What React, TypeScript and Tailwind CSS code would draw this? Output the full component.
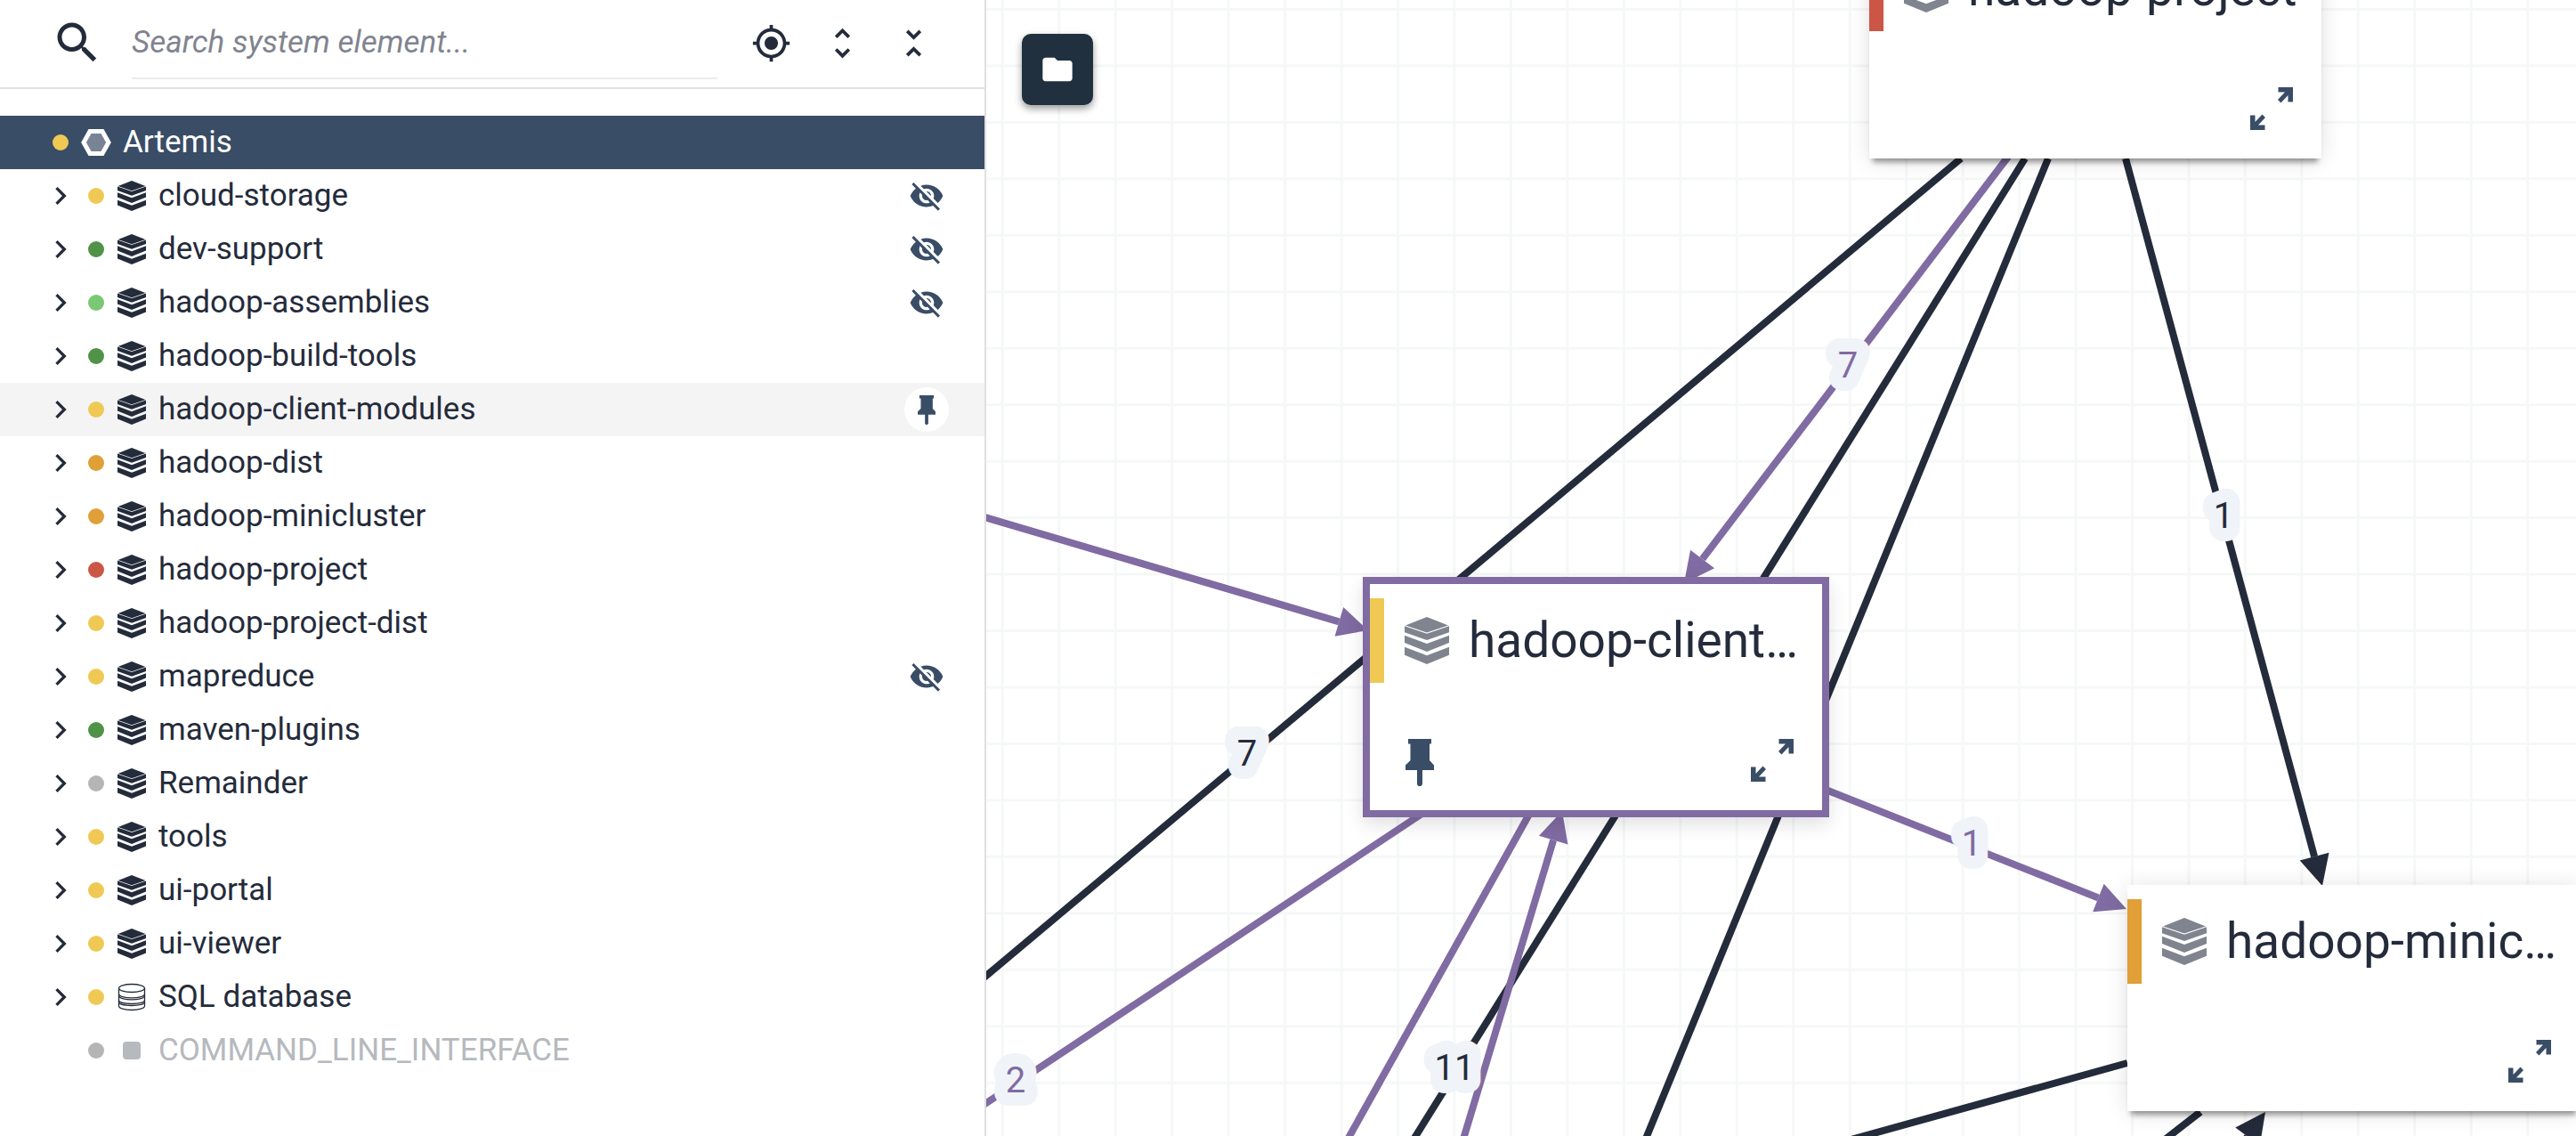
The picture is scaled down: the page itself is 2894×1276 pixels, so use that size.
import React from "react";

type Tone = "yellow" | "green" | "lime" | "orange" | "red" | "gray";

const dotTone: Record<Tone, string> = {
  yellow: "bg-[#efc954]",
  green: "bg-[#509348]",
  lime: "bg-[#7ac774]",
  orange: "bg-[#e09f37]",
  red: "bg-[#cb5646]",
  gray: "bg-[#b5b5b5]",
};

type Item = {
  name: string;
  tone: Tone;
  icon?: "stack" | "database" | "square";
  action?: "hidden" | "pinned";
};

const items: Item[] = [
  { name: "cloud-storage", tone: "yellow", action: "hidden" },
  { name: "dev-support", tone: "green", action: "hidden" },
  { name: "hadoop-assemblies", tone: "lime", action: "hidden" },
  { name: "hadoop-build-tools", tone: "green" },
  { name: "hadoop-client-modules", tone: "yellow", action: "pinned" },
  { name: "hadoop-dist", tone: "orange" },
  { name: "hadoop-minicluster", tone: "orange" },
  { name: "hadoop-project", tone: "red" },
  { name: "hadoop-project-dist", tone: "yellow" },
  { name: "mapreduce", tone: "yellow", action: "hidden" },
  { name: "maven-plugins", tone: "green" },
  { name: "Remainder", tone: "gray" },
  { name: "tools", tone: "yellow" },
  { name: "ui-portal", tone: "yellow" },
  { name: "ui-viewer", tone: "yellow" },
  { name: "SQL database", tone: "yellow", icon: "database" },
  { name: "COMMAND_LINE_INTERFACE", tone: "gray", icon: "square" },
];

function MaterialIcon({ d, className }: { d: string; className: string }) {
  return (
    <svg viewBox="0 0 24 24" className={className} fill="currentColor" aria-hidden="true">
      <path d={d} />
    </svg>
  );
}

const paths = {
  search:
    "M15.5 14h-.79l-.28-.27C15.41 12.59 16 11.11 16 9.5 16 5.91 13.09 3 9.5 3S3 5.91 3 9.5 5.91 16 9.5 16c1.61 0 3.09-.59 4.23-1.57l.27.28v.79l5 4.99L20.49 19l-4.99-5zm-6 0C7.01 14 5 11.99 5 9.5S7.01 5 9.5 5 14 7.01 14 9.5 11.99 14 9.5 14z",
  locate:
    "M12 8c-2.21 0-4 1.79-4 4s1.79 4 4 4 4-1.79 4-4-1.79-4-4-4zm8.94 3c-.46-4.17-3.77-7.48-7.94-7.94V1h-2v2.06C6.83 3.52 3.52 6.83 3.06 11H1v2h2.06c.46 4.17 3.77 7.48 7.94 7.94V23h2v-2.06c4.17-.46 7.48-3.77 7.94-7.94H23v-2h-2.06zM12 19c-3.87 0-7-3.13-7-7s3.13-7 7-7 7 3.13 7 7-3.13 7-7 7z",
  unfoldMore:
    "M12 5.83L15.17 9l1.41-1.41L12 3 7.41 7.59 8.83 9 12 5.83zm0 12.34L8.83 15l-1.41 1.41L12 21l4.59-4.59L15.17 15 12 18.17z",
  unfoldLess:
    "M7.41 18.59L8.83 20 12 16.83 15.17 20l1.41-1.41L12 14l-4.59 4.59zm9.18-13.18L15.17 4 12 7.17 8.83 4 7.41 5.41 12 10l4.59-4.59z",
  chevron: "M10 6L8.59 7.41 13.17 12l-4.58 4.59L10 18l6-6z",
  hidden:
    "M12 7c2.76 0 5 2.24 5 5 0 .65-.13 1.26-.36 1.83l2.92 2.92c1.51-1.26 2.7-2.89 3.43-4.75-1.73-4.39-6-7.5-11-7.5-1.4 0-2.74.25-3.98.7l2.16 2.16C10.74 7.13 11.35 7 12 7zM2 4.27l2.28 2.28.46.46C3.08 8.3 1.78 10.02 1 12c1.73 4.39 6 7.5 11 7.5 1.55 0 3.03-.3 4.38-.84l.42.42L19.73 22 21 20.73 3.27 3 2 4.27zM7.53 9.8l1.55 1.55c-.05.21-.08.43-.08.65 0 1.66 1.34 3 3 3 .22 0 .44-.03.65-.08l1.55 1.55c-.67.33-1.41.53-2.2.53-2.76 0-5-2.24-5-5 0-.79.2-1.53.53-2.2zm4.31-.78l3.15 3.15.02-.16c0-1.66-1.34-3-3-3l-.17.01z",
  folder: "M10 4H4c-1.1 0-1.99.9-1.99 2L2 18c0 1.1.9 2 2 2h16c1.1 0 2-.9 2-2V8c0-1.1-.9-2-2-2h-8l-2-2z",
};

function StackIcon({ className }: { className: string }) {
  return (
    <svg viewBox="0 0 50 53" className={className} fill="currentColor" aria-hidden="true">
      <path d="M25 0L49 9.400L25 17.600L1 9.400Z" />
      <path d="M0 10.200L25 18.800L50 10.200V17.300L25 26L0 17.300Z" />
      <path d="M0 20.800L25 30L50 20.800V29L25 39L0 29Z" />
      <path d="M0 33.800L25 43.300L50 33.800V42.800L25 53L0 42.800Z" />
    </svg>
  );
}

function PinIcon({ className }: { className: string }) {
  return (
    <svg viewBox="0 0 32 53" className={className} fill="currentColor" aria-hidden="true">
      <path d="M3 0H29V5.500H27V24L32 29.500V35H19V51L17.500 53H14.500L13 51V35H0V29.500L5.500 24V5.500H3Z" />
    </svg>
  );
}

function ExpandIcon({ className }: { className: string }) {
  return (
    <svg viewBox="0 0 48 48" className={className} fill="currentColor" aria-hidden="true">
      <path d="M31.500 0H48V16.500H42.500V9L34.500 17.500L31 14L39 5.500H31.500Z" />
      <path d="M16.500 48H0V31.500H5.500V39L13.500 30.500L17 34L9 42.500H16.500Z" />
    </svg>
  );
}

function DatabaseIcon({ className }: { className: string }) {
  return (
    <svg viewBox="0 0 32 32" className={className} fill="none" stroke="currentColor" strokeWidth="1.300" aria-hidden="true">
      <ellipse cx="16" cy="6" rx="14.500" ry="4.500" />
      <path d="M1.500 6V26C1.500 28.500 8 30.500 16 30.500S30.500 28.500 30.500 26V6" />
      <path d="M1.500 12.500C1.500 15 8 16.800 16 16.800S30.500 15 30.500 12.500" />
      <path d="M1.500 14.500C1.500 17 8 18.800 16 18.800S30.500 17 30.500 14.500" />
      <path d="M1.500 19.500C1.500 22 8 23.500 16 23.500S30.500 22 30.500 19.500" />
      <path d="M1.500 21.500C1.500 24 8 25.500 16 25.500S30.500 24 30.500 21.500" />
    </svg>
  );
}

function TreeRow({ item }: { item: Item }) {
  const external = item.icon === "square";
  const rowTone = item.action === "pinned" ? "bg-[#f4f4f4]" : "";
  return (
    <li className={`flex h-[60px] items-center pr-10 pl-12 ${rowTone}`}>
      {external ? (
        <span className="size-10" />
      ) : (
        <button type="button" aria-label={`Expand ${item.name}`} className="size-10">
          <MaterialIcon d={paths.chevron} className="size-10" />
        </button>
      )}
      <span className={`ml-[11px] size-[18px] shrink-0 rounded-full ${dotTone[item.tone]}`} />
      <span className="ml-[14px] flex w-[34px] justify-center">
        {item.icon === "database" ? (
          <DatabaseIcon className="size-8" />
        ) : external ? (
          <span className="size-5 rounded-sm bg-[#b6b9be]" />
        ) : (
          <StackIcon className="h-[34px] w-8" />
        )}
      </span>
      <span className={`ml-[13px] flex-1 truncate ${external ? "text-[#b6b9be]" : ""}`}>{item.name}</span>
      {item.action === "hidden" && (
        <button type="button" aria-label={`Show ${item.name}`} className="flex size-[50px] items-center justify-center text-[#3a4d66]">
          <MaterialIcon d={paths.hidden} className="size-10" />
        </button>
      )}
      {item.action === "pinned" && (
        <button
          type="button"
          aria-label={`Unpin ${item.name}`}
          className="flex size-[50px] items-center justify-center rounded-full bg-white text-[#3a4d66]"
        >
          <PinIcon className="h-[33px] w-5" />
        </button>
      )}
    </li>
  );
}

function Sidebar() {
  return (
    <aside className="flex w-[1108px] shrink-0 flex-col border-r-2 border-[#e0e0e0] bg-white">
      <div className="flex h-[100px] items-start border-b-2 border-[#e0e0e0] pr-10 pl-[57px]">
        <label htmlFor="search" aria-label="Search" className="mt-[18px]">
          <MaterialIcon d={paths.search} className="size-[60px]" />
        </label>
        <input
          id="search"
          type="text"
          placeholder="Search system element..."
          className="mr-5 ml-[31px] h-[89px] min-w-0 flex-1 border-b-2 border-[#ebebeb] pt-2 placeholder:text-[#80848f] placeholder:italic focus:outline-none"
        />
        <div className="flex h-24 items-center">
          <button type="button" aria-label="Locate selection" className="flex w-20 justify-center">
            <MaterialIcon d={paths.locate} className="size-[45px]" />
          </button>
          <button type="button" aria-label="Expand all" className="flex w-20 justify-center">
            <MaterialIcon d={paths.unfoldMore} className="size-[45px]" />
          </button>
          <button type="button" aria-label="Collapse all" className="flex w-20 justify-center">
            <MaterialIcon d={paths.unfoldLess} className="size-[45px]" />
          </button>
        </div>
      </div>
      <nav aria-label="System elements" className="pt-[30px]">
        <div className="flex h-[60px] items-center bg-[#3a4d66] pl-12 text-white">
          <span className="ml-[11px] size-[18px] rounded-full bg-[#efc954]" />
          <svg viewBox="0 0 34 30" className="ml-[14px] h-[30px] w-[34px]" aria-hidden="true">
            <path d="M10 2.500H24L31 15L24 27.500H10L3 15Z" fill="#788495" stroke="#ffffff" strokeWidth="5" />
          </svg>
          <span className="ml-[13px]">Artemis</span>
        </div>
        <ul>
          {items.map((item) => (
            <TreeRow key={item.name} item={item} />
          ))}
        </ul>
      </nav>
    </aside>
  );
}

type Edge = { from: [number, number]; to: [number, number]; selected?: boolean; arrow?: boolean };

const edges: Edge[] = [
  { from: [1095, 178], to: [-12, 1106] },
  { from: [1167, 178], to: [470, 1296] },
  { from: [1193, 178], to: [734, 1296] },
  { from: [1280, 178], to: [1501, 995], arrow: true },
  { from: [1282, 1194], to: [950, 1286] },
  { from: [1364, 1249], to: [1310, 1291] },
  { from: [1403, 1296], to: [1437, 1249], arrow: true },
  { from: [1148, 176], to: [784, 655], selected: true, arrow: true },
  { from: [-12, 578], to: [429, 708], selected: true, arrow: true },
  { from: [494, 911], to: [-12, 1247], selected: true },
  { from: [612, 911], to: [397, 1296], selected: true },
  { from: [531, 1296], to: [647, 911], selected: true, arrow: true },
  { from: [938, 885], to: [1281, 1021], selected: true, arrow: true },
];

const labels = [
  { text: "7", x: 293, y: 860 },
  { text: "11", x: 526, y: 1213 },
  { text: "1", x: 1390, y: 593 },
  { text: "7", x: 968, y: 424, selected: true },
  { text: "2", x: 33, y: 1227, selected: true },
  { text: "1", x: 1107, y: 961, selected: true },
];

function EdgeLine({ edge }: { edge: Edge }) {
  const [x1, y1] = edge.from;
  const [x2, y2] = edge.to;
  const length = Math.hypot(x2 - x1, y2 - y1);
  const ux = (x2 - x1) / length;
  const uy = (y2 - y1) / length;
  const head = edge.arrow ? 34 : 0;
  const bx = x2 - ux * head;
  const by = y2 - uy * head;
  const color = edge.selected ? "#806ba2" : "#242b3b";
  return (
    <g>
      <line x1={x1} y1={y1} x2={bx} y2={by} stroke={color} strokeWidth={8} />
      {edge.arrow && (
        <polygon points={`${x2},${y2} ${bx - uy * 17},${by + ux * 17} ${bx + uy * 17},${by - ux * 17}`} fill={color} />
      )}
    </g>
  );
}

function Edges() {
  return (
    <svg className="absolute inset-0 size-full" aria-hidden="true">
      <defs>
        <pattern id="grid" x="16.800" y="9" width="63.460" height="63.460" patternUnits="userSpaceOnUse">
          <path d="M0 1.500H63.460M1.500 0V63.460" stroke="#f6f8f8" strokeWidth="3" />
        </pattern>
      </defs>
      <rect width="100%" height="100%" fill="url(#grid)" />
      {edges.map((edge, i) => (
        <EdgeLine key={i} edge={edge} />
      ))}
      {labels.map((label) => (
        <text
          key={`${label.text}-${label.x}`}
          x={label.x}
          y={label.y}
          textAnchor="middle"
          fill={label.selected ? "#806ba2" : "#242b3b"}
          stroke="#f0f3f8"
          strokeWidth={30}
          strokeLinejoin="round"
          paintOrder="stroke"
          className="text-[40px]"
        >
          {label.text}
        </text>
      ))}
    </svg>
  );
}

type NodeProps = { name: string; tone: Tone; place: string; pinned?: boolean };

function NodeCard({ name, tone, place, pinned }: NodeProps) {
  const frame = pinned
    ? "outline-8 outline-[#806ba2] shadow-[0_8px_20px_8px_rgba(0,0,0,0.12)]"
    : "shadow-[0_8px_6px_-4px_rgba(0,0,0,0.4),0_2px_24px_rgba(0,0,0,0.12)]";
  return (
    <article className={`absolute flex h-[254px] w-[508px] flex-col justify-between bg-white ${place} ${frame}`}>
      <header className="mt-4 flex h-[95px] items-center">
        <span className={`h-full w-4 shrink-0 ${dotTone[tone]}`} />
        <StackIcon className="ml-[23px] h-[53px] w-[50px] shrink-0 text-[#80848f]" />
        <h2 className="mr-5 ml-[22px] flex-1 truncate text-[55px]">{name}</h2>
      </header>
      <footer className="flex h-20 items-start justify-between pr-8 pl-10 text-[#3a4d66]">
        {pinned ? (
          <button type="button" aria-label={`Unpin ${name}`}>
            <PinIcon className="h-[53px] w-8" />
          </button>
        ) : (
          <span />
        )}
        <button type="button" aria-label={`Open ${name}`}>
          <ExpandIcon className="size-12" />
        </button>
      </footer>
    </article>
  );
}

function Canvas() {
  return (
    <main className="relative min-w-0 flex-1 overflow-hidden bg-white">
      <Edges />
      <NodeCard name="hadoop-project" tone="red" place="left-[992px] top-[-76px]" />
      <NodeCard name="hadoop-client-modules" tone="yellow" place="left-[431px] top-[656px]" pinned />
      <NodeCard name="hadoop-minicluster" tone="orange" place="left-[1282px] top-[994px]" />
      <button
        type="button"
        aria-label="Open folder"
        className="absolute top-[38px] left-10 flex size-20 items-center justify-center rounded-[10px] bg-[#20303f] text-white shadow-[0_4px_8px_rgba(0,0,0,0.4)]"
      >
        <MaterialIcon d={paths.folder} className="size-10" />
      </button>
    </main>
  );
}

export default function App() {
  return (
    <div className="flex h-screen overflow-hidden bg-white font-[Roboto,sans-serif] text-[35px] text-[#242b3b]">
      <Sidebar />
      <Canvas />
    </div>
  );
}
